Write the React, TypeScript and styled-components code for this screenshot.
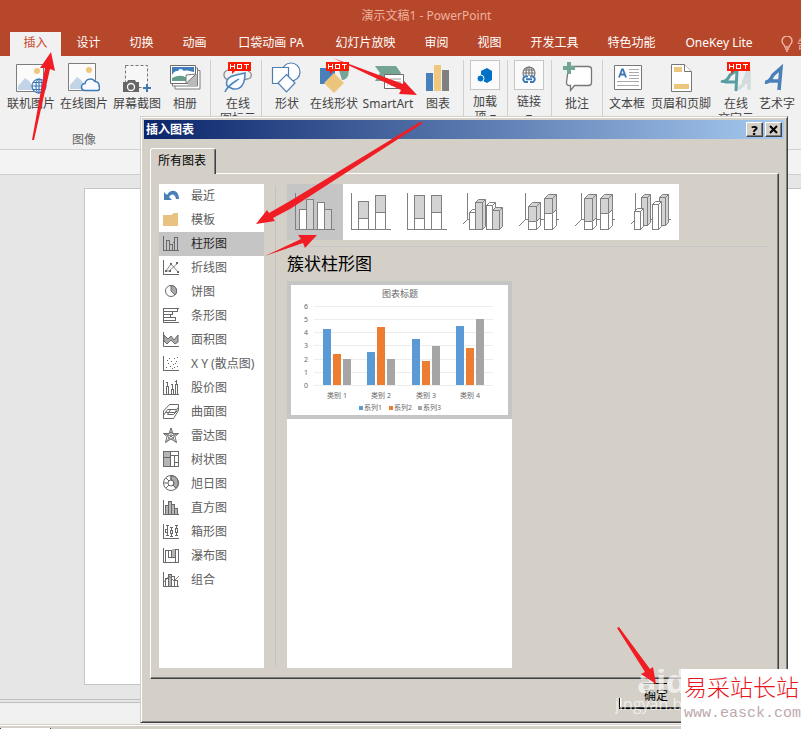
import React, { useState } from "react";
import styled, { createGlobalStyle, css } from "styled-components";

const FONT = '"Noto Sans", "Noto Sans CJK SC", sans-serif';
const FACE = "#d4d0c8";

const GlobalStyle = createGlobalStyle`
  * { box-sizing: border-box; }
  body { margin: 0; font-family: ${FONT}; font-size: 12px; }
  button { font: inherit; color: inherit; border: 0; padding: 0; background: none; cursor: default; }
`;

const Page = styled.div`
  position: relative;
  display: flex;
  flex-direction: column;
  min-height: 100vh;
  overflow: hidden;
  background: #e6e6e6;
`;

/* ---------- application window ---------- */

const TitleBar = styled.header`
  height: 32px;
  padding-left: 52px;
  background: #b7472a;
  color: #eeb19f;
  text-align: center;
  line-height: 32px;
`;

const TabStrip = styled.nav`
  display: flex;
  gap: 2px;
  height: 24px;
  padding-left: 10px;
  background: #b7472a;
`;

const RibbonTab = styled.button<{ $width: number; $active?: boolean }>`
  flex: none;
  width: ${(p) => p.$width}px;
  padding-bottom: 2px;
  line-height: 20px;
  white-space: nowrap;
  color: ${(p) => (p.$active ? "#d0451f" : "#ffffff")};
  background: ${(p) => (p.$active ? "#f1f1f1" : "transparent")};
`;

const TellMe = styled.button`
  display: flex;
  flex: none;
  align-items: center;
  gap: 4px;
  padding-left: 12px;
  color: #efb7a6;
`;

const Ribbon = styled.section`
  display: flex;
  height: 94px;
  padding: 4px 0 0 5px;
  background: #f1f1f1;
  border-bottom: 1px solid #d2d2d2;
`;

const RibbonGroup = styled.div<{ $left?: number; $right?: number; $last?: boolean }>`
  display: flex;
  flex: none;
  flex-direction: column;
  justify-content: space-between;
  padding: 0 ${(p) => p.$right || 0}px 0 ${(p) => p.$left || 0}px;
  border-right: ${(p) => (p.$last ? 0 : 1)}px solid #d0d0d0;
`;

const GroupItems = styled.div`
  display: flex;
`;

const GroupCaption = styled.div`
  padding-right: 44px;
  line-height: 18px;
  text-align: center;
  color: #666;
`;

const RibbonButton = styled.button<{ $width: number; $framed?: boolean }>`
  display: flex;
  flex-direction: column;
  align-items: center;
  width: ${(p) => p.$width}px;
  padding-top: ${(p) => (p.$framed ? 0 : 2)}px;
  color: #444;
  white-space: nowrap;
  line-height: 15px;
  svg { flex: none; }
`;

const RibbonLabel = styled.span<{ $framed?: boolean }>`
  display: flex;
  flex-direction: column;
  align-items: center;
  margin-top: ${(p) => (p.$framed ? 4 : 2)}px;
`;

const IconFrame = styled.span`
  display: grid;
  place-items: center;
  width: 30px;
  height: 30px;
  background: #fbfbfb;
  border: 1px solid #c6c6c6;
`;

const QuickStrip = styled.div`
  height: 25px;
  background: #f3f3f3;
  border-bottom: 1px solid #cfcfcf;
`;

const Workspace = styled.main`
  display: flex;
  flex: 1;
  padding: 13px 0 14px 84px;
`;

const Slide = styled.div`
  flex: 1;
  background: #fff;
  border: 1px solid #c6c6c6;
  border-right: 0;
`;

const Splitter = styled.div`
  height: 4px;
  border: solid #bfbfbf;
  border-width: 1px 0;
`;

const Notes = styled.div`
  height: 21px;
  background: #f0f0f0;
`;

const Taskbar = styled.footer`
  height: 5px;
  padding-top: 3px;
  background: ${FACE};
  border-top: 1px solid ${FACE};
  box-shadow: inset 0 1px #fff;
`;

const TaskButton = styled.div`
  width: 51px;
  height: 1px;
  background: #fff;
  border: solid #404040;
  border-width: 0 1px;
`;

/* ---------- dialog ---------- */

const Dialog = styled.section`
  position: absolute;
  top: 116px;
  right: 13px;
  bottom: 6px;
  left: 140px;
  display: flex;
  flex-direction: column;
  padding: 2px;
  background: ${FACE};
  border: 1px solid;
  border-color: ${FACE} #404040 #404040 ${FACE};
  box-shadow: inset 1px 1px #fff, inset -1px -1px #808080;
`;

const DialogTitle = styled.div`
  display: flex;
  align-items: center;
  gap: 2px;
  height: 19px;
  margin: 1px 1px 0;
  padding: 0 2px;
  background: linear-gradient(90deg, #0a246a, #a6caf0);
  color: #fff;
  font-weight: 700;
  h1 { flex: 1; margin: 0; font-size: 12px; line-height: 19px; }
`;

const CaptionButton = styled.button`
  display: grid;
  place-items: center;
  width: 17px;
  height: 15px;
  background: ${FACE};
  border: 1px solid;
  border-color: #fff #404040 #404040 #fff;
  box-shadow: inset -1px -1px #808080;
  color: #000;
  font-weight: 800;
  font-size: 13px;
  line-height: 12px;
`;

const DialogTab = styled.button`
  align-self: flex-start;
  position: relative;
  z-index: 1;
  width: 66px;
  height: 26px;
  margin: 9px 0 -1px 7px;
  padding: 0 2px 2px 0;
  line-height: 22px;
  color: #000;
  background: ${FACE};
  border: 1px solid;
  border-color: #fff #404040 transparent #fff;
  border-bottom: 0;
  border-radius: 3px 3px 0 0;
  box-shadow: inset -1px 0 #808080;
`;

const TabPanel = styled.div`
  display: flex;
  flex: 1;
  min-height: 0;
  margin: 0 6px 0 7px;
  padding: 10px 10px 10px 8px;
  border: 1px solid;
  border-color: #fff #404040 #404040 #fff;
  box-shadow: inset -1px -1px #808080;
`;

const KindList = styled.div`
  flex: none;
  width: 105px;
  background: #fff;
`;

const KindButton = styled.button<{ $selected: boolean }>`
  display: flex;
  align-items: center;
  gap: 12px;
  width: 100%;
  height: 24px;
  padding: 0 0 2px 4px;
  white-space: nowrap;
  color: ${(p) => (p.$selected ? "#262626" : "#5e5e5e")};
  background: ${(p) => (p.$selected ? "#c5c5c5" : "#fff")};
`;

const Divider = styled.div`
  flex: none;
  width: 1px;
  margin: 2px 11px;
  background: #c3c2bf;
`;

const Detail = styled.div`
  display: flex;
  flex: 1;
  flex-direction: column;
  min-width: 0;
  h2 {
    margin: 0;
    font-size: 17px;
    font-weight: 400;
    line-height: 34px;
    color: #000;
  }
`;

const TypeRow = styled.div`
  border-bottom: 1px solid #c5c5c5;
  padding-bottom: 6px;
`;

const TypeList = styled.div`
  display: flex;
  width: max-content;
  background: #fff;
`;

const TypeButton = styled.button<{ $selected: boolean }>`
  width: 56px;
  height: 56px;
  ${(p) => p.$selected && css`background: #c5c5c5;`}
  svg { display: block; }
`;

const PreviewPane = styled.div`
  flex: 1;
  width: 225px;
  background: #fff;
`;

const PreviewButton = styled.button`
  display: block;
  width: 100%;
  background: #fff;
  border: 4px solid #c5c5c5;
  svg { display: block; }
`;

const DialogFooter = styled.div`
  display: flex;
  justify-content: flex-end;
  padding: 4px 90px 11px 0;
`;

const OkButton = styled.button`
  width: 76px;
  height: 26px;
  padding-right: 2px;
  line-height: 24px;
  color: #000;
  background: ${FACE};
  border-bottom: 1px solid #000;
  box-shadow: inset 0 -1px #404040;
  background-image: linear-gradient(#000, #000), linear-gradient(#000, #000), linear-gradient(#fff, #fff);
  background-position: 24px 0, 0 100%, 1px 100%;
  background-size: 24px 1px, 1px 10px, 1px 10px;
  background-repeat: no-repeat;
`;

/* ---------- overlays ---------- */

const Arrows = styled.svg`
  position: absolute;
  top: 0;
  left: 0;
  pointer-events: none;
`;

const Watermark = styled.div`
  position: absolute;
  right: 112px;
  bottom: 14px;
  width: 74px;
  overflow: hidden;
  color: rgba(255, 255, 255, 0.65);
  font-family: "Open Sans", sans-serif;
  font-size: 16px;
  line-height: 22px;
  white-space: nowrap;
  pointer-events: none;
  strong { display: block; padding-left: 22px; font-size: 32px; line-height: 24px; }
`;

const SiteBadge = styled.aside`
  position: absolute;
  right: 0;
  bottom: 0;
  width: 120px;
  height: 60px;
  padding: 3px 0 0 3px;
  background: #fff;
  white-space: nowrap;
  overflow: hidden;
  strong {
    display: block;
    color: #e8141e;
    font: 300 23px/28px "Noto Sans CJK SC", sans-serif;
  }
  span {
    display: block;
    color: #bda9ad;
    font: 15px/28px "Liberation Mono", monospace;
  }
`;

/* ---------- ribbon icons ---------- */

const Hot = ({ x = 6 }: { x?: number }) => (
  <g transform={`translate(${x} 0)`}>
    <path d="M0 0h23v9H7l-3 3V9H0z" fill="#fe1a00" />
    <path
      d="M2.500 2v5M6.500 2v5M2.500 4.500h4M9.500 2.500h4v4h-4zM16 2.500h5M18.500 2.500V7"
      fill="none"
      stroke="#fff"
      shapeRendering="crispEdges"
    />
  </g>
);

const Picture = ({ x = 1, y = 2 }: { x?: number; y?: number }) => (
  <g transform={`translate(${x} ${y})`}>
    <path d="M.5.5h27v27H.5z" fill="#fbfbfb" stroke="#7d7d7d" />
    <circle cx="21" cy="7" r="3" fill="#edc77c" />
    <path d="M2 26V22l7-8 4 3 4 5 2 4z" fill="#c2d4e8" />
  </g>
);

const icons: Record<string, React.ReactNode> = {
  onlinePicture: (
    <>
      <Picture />
      <g fill="#f6fafe" stroke="#3d78b6" strokeWidth="1.2">
        <circle cx="24" cy="24" r="7" />
        <ellipse cx="24" cy="24" rx="3" ry="7" fill="none" />
        <path d="M17 24h14M18 20.500h12M18 27.500h12M24 17v14" />
      </g>
    </>
  ),
  cloudPicture: (
    <>
      <Picture x={0} y={1} />
      <path
        d="M17 28.500a3.500 3.500 0 0 1 0-7 5.500 5.500 0 0 1 10-2 4 4 0 0 1 4 5 2.500 2.500 0 0 1-1 4z"
        fill="#f7fbff"
        stroke="#3d78b6"
        strokeWidth="1.500"
      />
    </>
  ),
  screenshot: (
    <>
      <path d="M4.500 3.500h22v22h-22z" fill="#f7f7f7" stroke="#777" strokeDasharray="3 2" />
      <path d="M2 20h4l1-2h7l1 2h3v10H2z" fill="#666" />
      <circle cx="10" cy="25" r="3.500" fill="#666" stroke="#fff" strokeWidth="1.300" />
      <path d="M26 22v8M22 26h8" stroke="#3d78b6" strokeWidth="2" />
    </>
  ),
  album: (
    <>
      <path d="M6 8.500h25v18.500H6z" fill="#fff" stroke="#7d7d7d" />
      <path d="M3.500 6h25v18h-25z" fill="#fff" stroke="#7d7d7d" />
      <path d="M1.500 3.500h25v18h-25z" fill="#fff" stroke="#6b6b6b" />
      <path d="M3 5h22v14H3z" fill="#3f7dbb" />
      <path d="M3 13c2-4 4-4 6-4 2-4 5-1 6 0 3-1 5 0 10 1v6H3z" fill="#fff" />
      <path d="M3 19v-3c3-1 6-3 10-2 3 0 3 2 6 2v3z" fill="#659c8d" />
      <path d="M19 24v-10l9-2v12z" fill="#bababa" />
      <path d="M17 21.500V13l10-1z" fill="#f8f8f8" stroke="#777" />
    </>
  ),
  iconCloud: (
    <>
      <path
        d="M7 18c-6-1-7-8-1-10M26 9c5 2 4 8-1 8-2 1-5 1-8 0"
        fill="none"
        stroke="#8b8b8b"
        strokeWidth="1.300"
      />
      <path d="M5 24c-2-7 3-10 9-11l9-2c0 10-3 17-12 16l-6-3" fill="#f8fbff" stroke="#4a83bb" strokeWidth="1.500" />
      <path d="M3 30c3-7 8-9 14-13" fill="none" stroke="#4a83bb" strokeWidth="1.500" />
      <Hot />
    </>
  ),
  shapes: (
    <g fill="#fff" stroke="#4a7fb5" strokeWidth="1.200">
      <circle cx="20" cy="10" r="9" />
      <path d="M1.500 5.500h16v16h-16z" />
      <path d="M15.500 12.500l8.500 8.500-8.500 9-8.500-9z" />
    </g>
  ),
  onlineShapes: (
    <>
      <path d="M2 6h15v16H2z" fill="#4a80ba" />
      <path d="M20 5h10c2 8-1 13-6 13z" fill="#74a695" />
      <path d="M16 11l10 10-10 10L6 21z" fill="#ebc57b" />
      <Hot x={8} />
    </>
  ),
  smartArt: (
    <>
      <path d="M3 4h21l5 7-6 8H3l5-8z" fill="#72a593" />
      <path d="M12.500 12.500h19v14h-19z" fill="#fff" stroke="#6f6f6f" />
      <path d="M15 17h1M18 17h11M15 20h1M18 20h11M15 23h1M18 23h11" stroke="#999" />
    </>
  ),
  chart: (
    <g shapeRendering="crispEdges">
      <path d="M4 11h7v18H4z" fill="#4a80ba" />
      <path d="M12 3h7v26h-7z" fill="#efc87e" />
      <path d="M20 8h7v21h-7z" fill="#808080" />
    </g>
  ),
  comment: (
    <>
      <path d="M7.500 4.500h20q3 0 3 3v13q0 3-3 3h-14l-4 5v-5h-1q-3 0-3-3z" fill="#fff" stroke="#777" strokeWidth="1.300" />
      <path d="M6 0h4v4h4v4h-4v4H6V8H2V4h4z" fill="#72a593" />
    </>
  ),
  textBox: (
    <>
      <path d="M3.500 3.500h27v24h-27z" fill="#fff" stroke="#777" />
      <path d="M8 15.500l3-8h1l3 8M9 12.500h5" fill="none" stroke="#3d78b6" strokeWidth="1.800" />
      <path d="M18 7.500h10M18 10.500h10M18 13.500h10M18 16.500h10M6 19.500h22M6 23.500h22" stroke="#aaa" />
    </>
  ),
  headerFooter: (
    <>
      <path d="M6.500 2.500h13l7 7v20h-20z" fill="#fff" stroke="#777" />
      <path d="M19.500 2.500v7h7" fill="#fff" stroke="#777" />
      <path d="M9 5h8v5H9zM9 22h15v5H9z" fill="#ecc67c" />
    </>
  ),
  wordCloud: (
    <>
      <path d="M18 27l5-4 5-15h1v20M22 20h8" fill="none" stroke="#d2dcdd" strokeWidth="3.500" />
      <path d="M1 19c4 2 7-2 9-6l7-5-1 21M5 20h12" fill="none" stroke="#599da3" strokeWidth="3" />
      <Hot x={7} />
    </>
  ),
  wordArt: (
    <path d="M4 20c4 1 6-3 8-7l8-7-2 22M8 19h11" fill="none" stroke="#4a80ba" strokeWidth="3.500" />
  ),
};

const RibbonIcon = ({ name }: { name: string }) => (
  <svg width="32" height="32" viewBox="0 0 32 32" aria-hidden="true">
    {icons[name]}
  </svg>
);

type Item = { icon: string; label: string[]; width: number };
type Group = { items: Item[]; left?: number; right?: number; caption?: string };

const groupsBefore: Group[] = [
  {
    right: 3,
    caption: "图像",
    items: [
      { icon: "onlinePicture", label: ["联机图片"], width: 52 },
      { icon: "cloudPicture", label: ["在线图片"], width: 54 },
      { icon: "screenshot", label: ["屏幕截图"], width: 52 },
      { icon: "album", label: ["相册"], width: 44 },
    ],
  },
  { left: 4, items: [{ icon: "iconCloud", label: ["在线", "图标云"], width: 46 }] },
  {
    right: 7,
    items: [
      { icon: "shapes", label: ["形状"], width: 50 },
      { icon: "onlineShapes", label: ["在线形状"], width: 44 },
      { icon: "smartArt", label: ["SmartArt"], width: 64 },
      { icon: "chart", label: ["图表"], width: 36 },
    ],
  },
];

const groupsAfter: Group[] = [
  { items: [{ icon: "comment", label: ["批注"], width: 50 }] },
  {
    items: [
      { icon: "textBox", label: ["文本框"], width: 48 },
      { icon: "headerFooter", label: ["页眉和页脚"], width: 60 },
      { icon: "wordCloud", label: ["在线", "文字云"], width: 50 },
      { icon: "wordArt", label: ["艺术字"], width: 32 },
    ],
  },
];

const renderGroup = (g: Group, i: number, all: Group[], lastOpen: boolean) => (
  <RibbonGroup key={i} $left={g.left} $right={g.right} $last={lastOpen && i === all.length - 1}>
    <GroupItems>
      {g.items.map((it) => (
        <RibbonButton key={it.icon} $width={it.width}>
          <RibbonIcon name={it.icon} />
          <RibbonLabel>
            {it.label.map((l) => (
              <span key={l}>{l}</span>
            ))}
          </RibbonLabel>
        </RibbonButton>
      ))}
    </GroupItems>
    {g.caption && <GroupCaption>{g.caption}</GroupCaption>}
  </RibbonGroup>
);

const ribbonTabs: [string, number][] = [
  ["插入", 51],
  ["设计", 51],
  ["切换", 51],
  ["动画", 51],
  ["口袋动画 PA", 98],
  ["幻灯片放映", 87],
  ["审阅", 51],
  ["视图", 51],
  ["开发工具", 75],
  ["特色功能", 75],
  ["OneKey Lite", 96],
];

/* ---------- chart kind icons ---------- */

const AXIS = "M.5 1V15.500H16";

const kinds: [string, React.ReactNode][] = [
  [
    "最近",
    <g shapeRendering="auto" stroke="none">
      <path d="M1 5v8h8l-3-3c3-4 6-3 7 2h3c0-9-8-11-12-4z" fill="#4a80ba" />
    </g>,
  ],
  ["模板", <path d="M0 4h8l2-2h5v13H0z" fill="#e9c282" stroke="none" />],
  ["柱形图", <path d="M.5 1V15.500H16M3.500 15V5.500h3V15M6.500 9.500h3V15M9.500 7.500h2V15M11.500 7.500V2.500h3V15" />],
  [
    "折线图",
    <>
      <path d={AXIS} />
      <path d="M3 12l5-7 7 8M3 12h3l9-8" shapeRendering="auto" strokeWidth=".8" />
      <path d="M2 11h2v2H2zM7 4h2v2H7zM14 12h2v2h-2zM6 11h2v2H6zM13 3h2v2h-2z" fill="#666" stroke="none" />
    </>,
  ],
  [
    "饼图",
    <g shapeRendering="auto">
      <circle cx="8" cy="8" r="5.500" />
      <path d="M8 2.500V8l4 4a5.500 5.500 0 0 0-4-9.500z" fill="#aaa" />
    </g>,
  ],
  ["条形图", <path d="M.5 1v15M0 1.500h16M0 15.500h16M1 4.500h13.500v-3M1 7.500h8.500v-3M1 10.500h6.500v-3M1 13.500h11.500v-3H7" />],
  [
    "面积图",
    <g shapeRendering="auto">
      <path d="M1 4l4 4 3-3 3 4 4-5v7l-3 2-4-4-4 4-3-3z" fill="#aaa" />
      <path d={AXIS} />
    </g>,
  ],
  [
    "X Y (散点图)",
    <>
      <path d={AXIS} />
      <path
        d="M3 12h1M5 8h1M4 5h1M7 11h1M8 6h1M10 9h1M11 3h1M13 6h1M14 11h1M11 12h1M6 3h1M14 2h1M9 13h1M12 8h1"
      />
    </>,
  ],
  ["股价图", <path d="M.5 1V15.500H16M3.500 15V7.500h2V15M4.500 7V3M8.500 15v-4.500h2V15M9.500 10V5M12.500 15V5.500h2V15M13.500 5V1M3 3.500h2M8 5.500h2M12 2.500h2" />],
  [
    "曲面图",
    <g shapeRendering="auto">
      <path d="M.5 8l6-6.500h9v6l-5 8H.5zM.5 12.500l4-6h9M3 9.500h9l3-5M7.500 6.500l-3 5h6l4-4" />
    </g>,
  ],
  [
    "雷达图",
    <g shapeRendering="auto" strokeWidth=".9">
      <path d="M8 1l2 5.500h5.500L12 9.500l1.500 6L8 12l-5.500 3.500 1.500-6L.5 6.500H6zM8 1v8M.5 6.500L8 9l7.500-2.500M2.500 15.500L8 9l5.500 6.500M8 5l3.500 3-1.500 4H6L4.500 8z" />
    </g>,
  ],
  [
    "树状图",
    <>
      <path d="M1 1h7v14H1z" fill="#b5b5b5" stroke="none" />
      <path d="M.5.5h15v15H.5zM7.500.5v15M.5 6.500h7M7.500 4.500h8M11.500 4.500v11M11.500 11.500h4" />
    </>,
  ],
  [
    "旭日图",
    <g shapeRendering="auto">
      <path d="M8 .5a7.500 7.500 0 0 1 5 13L10 10A3 3 0 0 0 8 5z" fill="#aaa" />
      <circle cx="8" cy="8" r="7.500" />
      <circle cx="8" cy="8" r="3" />
      <path d="M.5 8h4.500M3 3l3 3M8 .5V5M3 13l3-3M10 10l3 3" />
    </g>,
  ],
  [
    "直方图",
    <>
      <path d="M2.500 15V6.500h3v-4h3v3h3v4h3V15z" fill="#b5b5b5" stroke="none" />
      <path d="M.5 1V15.500H16M2.500 15V6.500h3V15M5.500 6V2.500h3V15M8.500 5.500h3V15M11.500 9.500h3V15" />
    </>,
  ],
  ["箱形图", <path d="M.5 1V15.500H16M2.500 2.500h3M4 2v4M2.500 6.500h2v3h-2zM4 10v3M2.500 12.500h3M7 4.500h3M8.500 4v3M7.500 7.500h2v3h-2zM8.500 11v2M7 13.500h3M12 2.500h3M13.500 2v3M12.500 5.500h2v4h-2zM13.500 10v3M12 12.500h3" />],
  [
    "瀑布图",
    <>
      <path d="M9 2h3v8H9z" fill="#b5b5b5" stroke="none" />
      <path d="M.5 1V15.500H15.500V2.500h-3V15M2.500 15V3.500h3V7M5.500 3.500h3v7h-3V7M8.500 10.500h3" />
    </>,
  ],
  [
    "组合",
    <>
      <path d="M5 3h4v12H5z" fill="#b5b5b5" stroke="none" />
      <path d="M.5 1V15.500H16M2.500 15V7.500h3M5.500 15V3.500h3V15M8.500 5.500h3V15M11.500 9.500h3V15" />
      <path d="M1 11l5-6 5 5 5-5" shapeRendering="auto" strokeWidth=".8" />
    </>,
  ],
];

/* ---------- column chart types ---------- */

const GREY = "#d3d3d3";

type ColumnProps = { x: number; w: number; top: number; base?: number; split?: number; depth?: number; fill?: string };

const Column = ({ x, w, top, base = 45.5, split, depth = 0, fill = "#fff" }: ColumnProps) => (
  <g>
    {depth > 0 && (
      <path
        d={`M${x} ${top}l${depth} ${-depth}h${w}V${base - depth}l${-depth} ${depth}V${top}zM${x + w} ${top}l${depth} ${-depth}`}
        fill={fill}
        shapeRendering="auto"
      />
    )}
    <rect x={x} y={top} width={w} height={base - top} fill={split ? "#fff" : fill} />
    {split && <rect x={x} y={top} width={w} height={split - top} fill={fill} />}
    {split && depth > 0 && (
      <path
        d={`M${x + w} ${split}l${depth} ${-depth}V${base - depth}l${-depth} ${depth}z`}
        fill="#fff"
        shapeRendering="auto"
      />
    )}
  </g>
);

const flatAxis = <path d="M8.500 9V45.500H48" fill="none" />;
const deepAxis = (x: number, y: number) => (
  <path d={`M${x} 9V35.500L8 ${y}M${x} 35.500H48`} fill="none" />
);

const chartTypes: [string, React.ReactNode][] = [
  [
    "簇状柱形图",
    <>
      {flatAxis}
      <Column x={12.5} w={7} top={25.5} />
      <Column x={19.5} w={7} top={15.5} fill={GREY} />
      <Column x={30.5} w={7} top={18.5} />
      <Column x={37.5} w={7} top={25.5} fill={GREY} />
    </>,
  ],
  [
    "堆积柱形图",
    <>
      {flatAxis}
      <Column x={15.5} w={10} top={17.5} split={34.5} fill={GREY} />
      <Column x={32.5} w={10} top={11.5} split={28.5} fill={GREY} />
    </>,
  ],
  [
    "百分比堆积柱形图",
    <>
      {flatAxis}
      <Column x={15.5} w={10} top={11.5} split={34.5} fill={GREY} />
      <Column x={32.5} w={10} top={11.5} split={28.5} fill={GREY} />
    </>,
  ],
  [
    "三维簇状柱形图",
    <>
      {deepAxis(12.5, 40)}
      <Column x={14.5} w={6} top={28.5} depth={3} />
      <Column x={20.5} w={7} top={18.5} depth={3} fill={GREY} />
      <Column x={31.5} w={6} top={21.5} depth={3} />
      <Column x={37.5} w={7} top={26.5} depth={3} fill={GREY} />
    </>,
  ],
  [
    "三维堆积柱形图",
    <>
      {deepAxis(14.5, 42)}
      <Column x={17.5} w={8} top={22.5} split={37.5} depth={4} fill={GREY} />
      <Column x={33.5} w={8} top={14.5} split={29.5} depth={4} fill={GREY} />
    </>,
  ],
  [
    "三维百分比堆积柱形图",
    <>
      {deepAxis(14.5, 42)}
      <Column x={17.5} w={8} top={14.5} split={37.5} depth={4} fill={GREY} />
      <Column x={33.5} w={8} top={14.5} split={29.5} depth={4} fill={GREY} />
    </>,
  ],
  [
    "三维柱形图",
    <>
      {deepAxis(12.5, 40)}
      <Column x={18.5} w={6} top={13.5} base={41.5} depth={3} fill={GREY} />
      <Column x={11.5} w={6} top={27.5} depth={3} />
      <Column x={36.5} w={6} top={13.5} base={41.5} depth={3} fill={GREY} />
      <Column x={29.5} w={6} top={20.5} depth={3} />
    </>,
  ],
];

/* ---------- preview chart ---------- */

const series = [
  { name: "系列1", color: "#5b9bd5", values: [4.3, 2.5, 3.5, 4.5] },
  { name: "系列2", color: "#ed7d31", values: [2.4, 4.4, 1.8, 2.8] },
  { name: "系列3", color: "#a5a5a5", values: [2, 2, 3, 5] },
];
const columnStarts = [32, 76, 121, 165];
const legendStarts = [68, 98, 127];

const PreviewChart = () => (
  <svg width="217" height="130" viewBox="0 0 217 130" fontSize="7" fill="#666" role="img" aria-label="图表标题">
    <text x="109" y="12" fontSize="9" textAnchor="middle">图表标题</text>
    {[0, 1, 2, 3, 4, 5, 6].map((n) => (
      <g key={n}>
        <path d={`M23 ${100.5 - Math.round(n * 13.2)}H202`} stroke="#ededed" />
        <text x="15" y={103 - Math.round(n * 13.2)} textAnchor="middle">{n}</text>
      </g>
    ))}
    {series.map((s, i) => (
      <g key={s.name}>
        {s.values.map((v, c) => {
          const h = Math.round(v * 13.1);
          return <rect key={c} x={columnStarts[c] + i * 10} y={100 - h} width="8" height={h} fill={s.color} />;
        })}
        <rect x={legendStarts[i]} y="121" width="4" height="4" fill={s.color} />
        <text x={legendStarts[i] + 5} y="125">{s.name}</text>
      </g>
    ))}
    {columnStarts.map((x, i) => (
      <text key={x} x={x + 14} y="113" textAnchor="middle">{`类别 ${i + 1}`}</text>
    ))}
  </svg>
);

export default function App() {
  const [kind, setKind] = useState("柱形图");
  const [type, setType] = useState("簇状柱形图");

  return (
    <Page>
      <GlobalStyle />
      <TitleBar>演示文稿1 - PowerPoint</TitleBar>
      <TabStrip>
        {ribbonTabs.map(([label, width], i) => (
          <RibbonTab key={label} $width={width} $active={i === 0}>{label}</RibbonTab>
        ))}
        <TellMe aria-label="告诉我">
          <svg width="12" height="16" viewBox="0 0 12 16" fill="none" stroke="currentColor" strokeWidth="1.400" aria-hidden="true">
            <path d="M4 11c0-2-3-3-3-6a5 5 0 0 1 10 0c0 3-3 4-3 6zM4 13h4M5 15h2" />
          </svg>
          告
        </TellMe>
      </TabStrip>
      <Ribbon>
        {groupsBefore.map((g, i, all) => renderGroup(g, i, all, false))}
        <RibbonGroup $right={1}>
          <RibbonButton $width={42} $framed>
            <IconFrame>
              <svg width="18" height="18" viewBox="0 0 18 18" fill="#0072c6" aria-hidden="true">
                <path d="M5 5l6-3 5 3v9l-5 3-4-2v-5l-2-1z" />
                <circle cx="4.500" cy="12.500" r="3.500" stroke="#fff" />
              </svg>
            </IconFrame>
            <RibbonLabel $framed><span>加载</span><span>项 ▾</span></RibbonLabel>
          </RibbonButton>
        </RibbonGroup>
        <RibbonGroup $right={1}>
          <RibbonButton $width={42} $framed>
            <IconFrame>
              <svg width="18" height="18" viewBox="0 0 18 18" fill="none" aria-hidden="true">
                <g stroke="#777" strokeWidth="1.200">
                  <circle cx="9" cy="7" r="6" />
                  <ellipse cx="9" cy="7" rx="3" ry="6" />
                  <path d="M3 7h12M9 1v9M4 4h10" />
                </g>
                <path d="M0 10h18v7H0z" fill="#fbfbfb" />
                <path d="M8 10.500H5a3 3 0 0 0 0 5.500h3M10 10.500h3a3 3 0 0 1 0 5.500h-3M6 13.300h6" stroke="#3d78b6" strokeWidth="2" />
              </svg>
            </IconFrame>
            <RibbonLabel $framed><span>链接</span><span>▾</span></RibbonLabel>
          </RibbonButton>
        </RibbonGroup>
        {groupsAfter.map((g, i, all) => renderGroup(g, i, all, true))}
      </Ribbon>
      <QuickStrip />
      <Workspace>
        <Slide />
      </Workspace>
      <Splitter />
      <Notes />
      <Taskbar>
        <TaskButton />
      </Taskbar>

      <Dialog role="dialog" aria-label="插入图表">
        <DialogTitle>
          <h1>插入图表</h1>
          <CaptionButton aria-label="帮助">?</CaptionButton>
          <CaptionButton aria-label="关闭">
            <svg width="10" height="9" viewBox="0 0 10 9" stroke="#000" strokeWidth="2" aria-hidden="true">
              <path d="M1 1l7 7M8 1L1 8" />
            </svg>
          </CaptionButton>
        </DialogTitle>
        <DialogTab>所有图表</DialogTab>
        <TabPanel>
          <KindList>
            {kinds.map(([label, icon]) => (
              <KindButton key={label} $selected={label === kind} onClick={() => setKind(label)}>
                <svg width="16" height="16" viewBox="0 0 16 16" fill="none" stroke="#696969" shapeRendering="crispEdges" aria-hidden="true">
                  {icon}
                </svg>
                {label}
              </KindButton>
            ))}
          </KindList>
          <Divider />
          <Detail>
            <TypeRow>
              <TypeList>
                {chartTypes.map(([label, icon]) => (
                  <TypeButton key={label} aria-label={label} $selected={label === type} onClick={() => setType(label)}>
                    <svg width="56" height="56" viewBox="0 0 56 56" stroke="#808080" shapeRendering="crispEdges" aria-hidden="true">
                      {icon}
                    </svg>
                  </TypeButton>
                ))}
              </TypeList>
            </TypeRow>
            <h2>{type}</h2>
            <PreviewPane>
              <PreviewButton>
                <PreviewChart />
              </PreviewButton>
            </PreviewPane>
          </Detail>
        </TabPanel>
        <DialogFooter>
          <OkButton>确定</OkButton>
        </DialogFooter>
      </Dialog>

      <Watermark>
        <strong>aid</strong>
        jingyan.b
      </Watermark>

      <Arrows width="801" height="729" viewBox="0 0 801 729" fill="#f01e24" aria-hidden="true">
        <path d="M32 140L45 68l-5 0L51 52l4 19-5-2L34 140z" />
        <path d="M333 58L403 84l1-3L417 95l-18-1 2-4z" />
        <path d="M420 122L290 201l-21 12-2-3-11 14 19-3-2-3 17-9L423 123z" />
        <path d="M265 256l36-17-3-4 19 0-12 13-2-5z" />
        <path d="M617 628l28 44-4 2 15 10-3-17-3 2-31-42z" />
      </Arrows>

      <SiteBadge>
        <strong>易采站长站</strong>
        <span>www.easck.com</span>
      </SiteBadge>
    </Page>
  );
}
